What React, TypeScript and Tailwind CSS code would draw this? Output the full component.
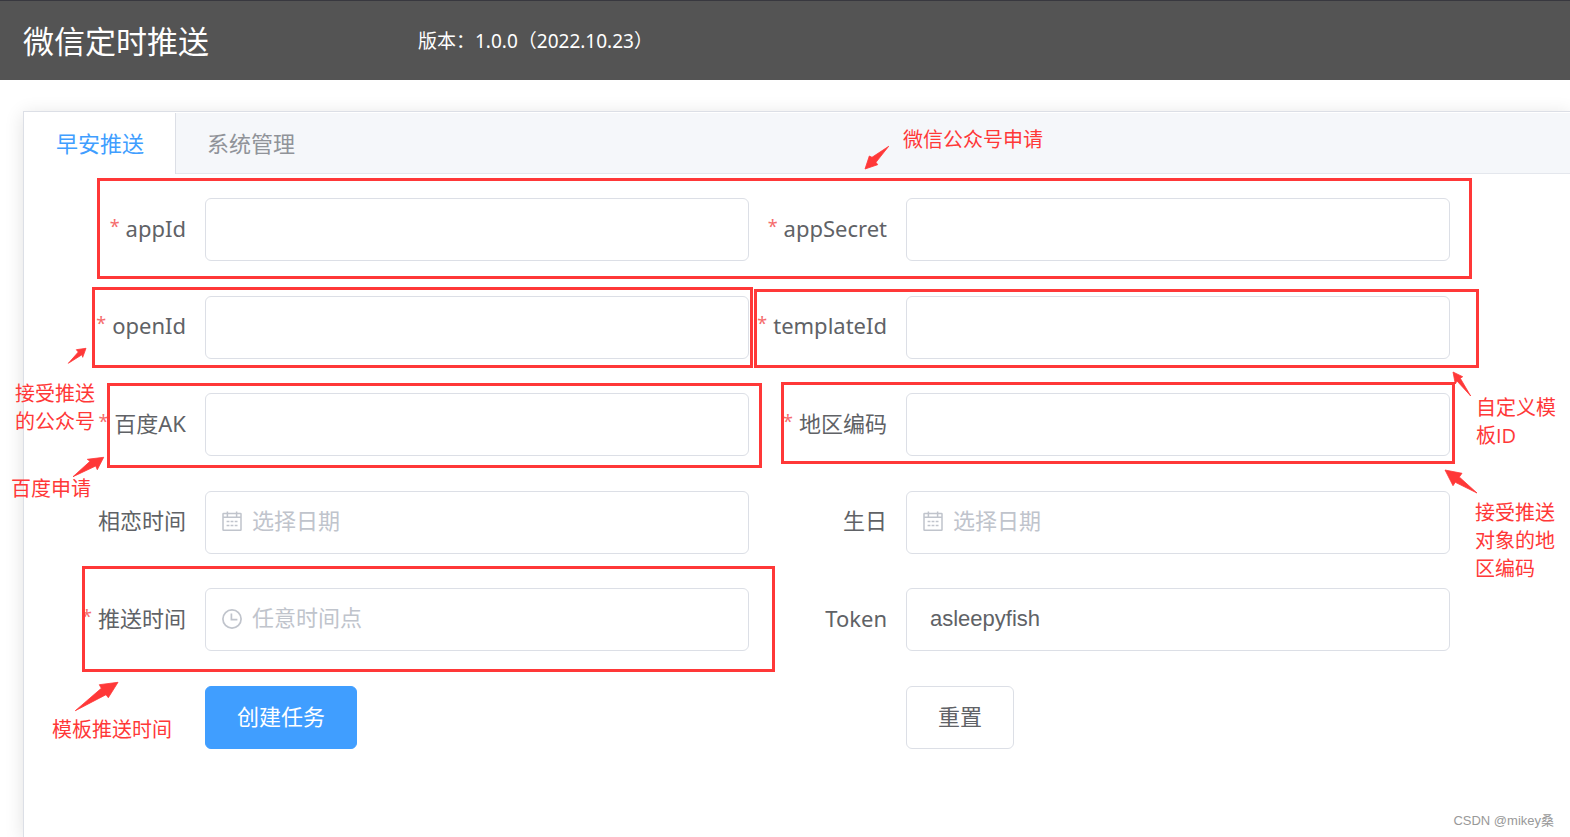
import React, { useState } from "react";

const RED = "#ff3838";

function CalendarIcon() {
  return (
    <svg className="size-5 shrink-0" viewBox="0 0 20 20" fill="none" stroke="#c0c4cc" strokeWidth="1.5" aria-hidden="true">
      <rect x="1" y="2.4" width="18" height="16.8" rx="0.5" />
      <path d="M1 6.2h18M5.4 0.4v5M14.6 0.4v5" />
      <path d="M4.6 10.4h2.8M8.6 10.4h2.8M12.7 10.4h2.8M4.6 14.4h2.8M8.6 14.4h2.8M12.7 14.4h2.8" />
    </svg>
  );
}

function ClockIcon() {
  return (
    <svg className="size-5 shrink-0" viewBox="0 0 20 20" fill="none" stroke="#c0c4cc" strokeWidth="1.7" aria-hidden="true">
      <circle cx="10" cy="10" r="9.1" />
      <path d="M9.4 4.6v6h6" />
    </svg>
  );
}

type FieldProps = {
  id: string;
  label: string;
  required?: boolean;
  placeholder?: string;
  icon?: React.ReactNode;
  value: string;
  onChange: (value: string) => void;
};

function Field({ id, label, required, placeholder, icon, value, onChange }: FieldProps) {
  return (
    <div className="flex items-center">
      <label htmlFor={id} className="flex w-[157px] shrink-0 justify-end pr-[19px] pb-[3px] whitespace-nowrap text-[#606266]">
        {required && <span className="mr-1.5 text-[18px] leading-7 text-[#f56c6c]">*</span>}
        {label}
      </label>
      <div className="flex h-[63px] min-w-0 flex-1 items-center gap-2.5 rounded-md border border-[#dcdfe6] bg-white px-4 pb-0.5">
        {icon}
        <input
          id={id}
          type="text"
          value={value}
          placeholder={placeholder}
          onChange={(e) => onChange(e.target.value)}
          className={
            icon
              ? "min-w-0 flex-1 bg-transparent font-['Liberation_Sans','Noto_Sans_CJK_SC',sans-serif] text-[#606266] outline-none placeholder:text-[#c0c4cc]"
              : "min-w-0 flex-1 bg-transparent px-[7px] font-['Liberation_Sans','Noto_Sans_CJK_SC',sans-serif] text-[#606266] outline-none"
          }
        />
      </div>
    </div>
  );
}

const FIELDS = [
  { id: "appId", label: "appId", required: true },
  { id: "appSecret", label: "appSecret", required: true },
  { id: "openId", label: "openId", required: true },
  { id: "templateId", label: "templateId", required: true },
  { id: "baiduAk", label: "百度AK", required: true },
  { id: "area", label: "地区编码", required: true },
  { id: "loveDate", label: "相恋时间", placeholder: "选择日期", icon: <CalendarIcon /> },
  { id: "birthday", label: "生日", placeholder: "选择日期", icon: <CalendarIcon /> },
  { id: "pushTime", label: "推送时间", required: true, placeholder: "任意时间点", icon: <ClockIcon /> },
  { id: "token", label: "Token" },
];

const INITIAL: Record<string, string> = { token: "asleepyfish" };

const FRAMES = [
  "left-[97px] top-[178px] h-[101px] w-[1375px]",
  "left-[92px] top-[287px] h-[81px] w-[661px]",
  "left-[754px] top-[289px] h-[79px] w-[725px]",
  "left-[107px] top-[383px] h-[85px] w-[655px]",
  "left-[781px] top-[382px] h-[82px] w-[674px]",
  "left-[82px] top-[566px] h-[106px] w-[693px]",
];

const NOTES = [
  { place: "left-[903px] top-[126px]", lines: ["微信公众号申请"] },
  { place: "left-[15px] top-[380px]", lines: ["接受推送", "的公众号"] },
  { place: "left-[11px] top-[475px]", lines: ["百度申请"] },
  { place: "left-[52px] top-[716px]", lines: ["模板推送时间"] },
  { place: "left-[1476px] top-[394px]", lines: ["自定义模", "板ID"] },
  { place: "left-[1475px] top-[499px]", lines: ["接受推送", "对象的地", "区编码"] },
];

const ARROWS = [
  "865,169 869.3,156 872,157.3 888.7,146.3 876,162.3 877.7,164.7",
  "86,348.3 76.3,349.7 78.3,352 68.3,363.3 82,354.7 82.7,357.3",
  "103.7,457.3 87.3,459.3 90,461.3 73,476.7 95.7,466 97.3,469.7",
  "118,682.3 99.3,684.7 101.3,688.3 75.3,710.7 106,694.7 108.3,697.7",
  "1453,372 1462.7,376.7 1460.3,378.3 1470.7,396 1457,381 1455.3,384",
  "1445,470 1462,473.3 1459.3,477 1477,493 1455.3,482.3 1453,485.7",
];

function Annotations() {
  return (
    <div className="pointer-events-none absolute inset-0">
      {FRAMES.map((frame) => (
        <div key={frame} className={`absolute border-3 border-[#ff3838] ${frame}`} />
      ))}
      <svg className="absolute top-0 left-0" width="1570" height="837" viewBox="0 0 1570 837" fill={RED} stroke={RED} strokeWidth="0.8" strokeLinejoin="round" aria-hidden="true">
        {ARROWS.map((points) => (
          <polygon key={points} points={points} />
        ))}
      </svg>
      {NOTES.map((note) => (
        <p key={note.place} className={`absolute font-['Open_Sans','Noto_Sans_CJK_SC',sans-serif] text-[20px] leading-7 whitespace-nowrap text-[#ff3838] ${note.place}`}>
          {note.lines.map((line) => (
            <span key={line} className="block">{line}</span>
          ))}
        </p>
      ))}
    </div>
  );
}

export default function App() {
  const [values, setValues] = useState<Record<string, string>>(INITIAL);

  return (
    <div className="relative flex min-h-screen flex-col overflow-hidden bg-white font-['Noto_Sans','Noto_Sans_CJK_SC',sans-serif] text-[22px]">
      <header className="flex h-20 items-center border-t border-[#38383f] bg-[#545454] pl-[23px] text-white">
        <h1 className="w-[395px] pt-px text-[31px] leading-10">微信定时推送</h1>
        <p className="text-[19px] leading-7">版本：1.0.0（2022.10.23）</p>
      </header>

      <main className="mt-[31px] ml-[23px] flex-1 border-t border-l border-[#dcdfe6] bg-white pt-px shadow-[0_3px_18px_rgba(0,0,0,0.12)]">
        <nav className="flex h-[61px] border-b border-[#e4e7ed] bg-[#f5f7fa]">
          <button type="button" className="-mb-px border-r border-[#dcdfe6] bg-white pr-[31px] pl-8 text-[#409eff]">早安推送</button>
          <button type="button" className="px-[31px] text-[#909399]">系统管理</button>
        </nav>

        <form
          className="mt-6 grid min-h-[551px] grid-cols-2 content-between pr-30 pl-6"
          onSubmit={(e) => e.preventDefault()}
          onReset={() => setValues(INITIAL)}
        >
          {FIELDS.map((field) => (
            <Field
              key={field.id}
              {...field}
              value={values[field.id] ?? ""}
              onChange={(value) => setValues((prev) => ({ ...prev, [field.id]: value }))}
            />
          ))}
          <div className="pl-[157px]">
            <button type="submit" className="h-[63px] rounded-md border border-[#409eff] bg-[#409eff] px-[31px] pb-0.5 text-white">创建任务</button>
          </div>
          <div className="pl-[157px]">
            <button type="reset" className="h-[63px] rounded-md border border-[#dcdfe6] bg-white px-[31px] pb-0.5 text-[#606266]">重置</button>
          </div>
        </form>
      </main>

      <Annotations />
      <p className="absolute right-4 bottom-1 font-['Liberation_Sans','Noto_Sans_CJK_SC',sans-serif] text-[13px] leading-6 text-[#999999]">CSDN @mikey桑</p>
    </div>
  );
}
